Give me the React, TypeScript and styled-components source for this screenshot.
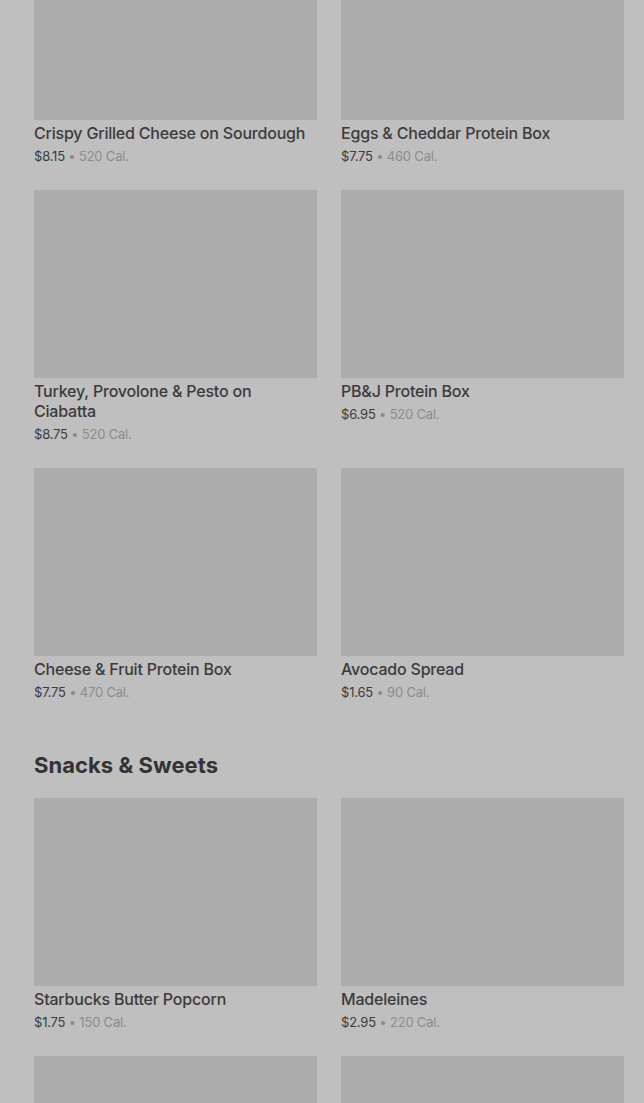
import React from 'react';
import styled, { createGlobalStyle } from 'styled-components';

const Global = createGlobalStyle`
  html, body {
    margin: 0;
    background: #bfbfbf;
    font-family: Inter, "Liberation Sans", Arial, sans-serif;
  }
`

const Page = styled.div`
  padding: 0 20px 0 34px;
  margin-top: -68px;
  overflow: hidden;
`

const Section = styled.section`
  & + & {
    margin-top: 50px;
  }
`

const Heading = styled.h2`
  margin: 0 0 19px;
  font-size: 22px;
  line-height: 28px;
  font-weight: 700;
  color: #333;
  letter-spacing: 0.05px;
`

const Grid = styled.div`
  display: grid;
  grid-template-columns: 283px 283px;
  column-gap: 24px;
  row-gap: 25px;
`

const Card = styled.div`
  display: flex;
  flex-direction: column;
`

const Thumb = styled.div`
  height: 188px;
  background: #acacac;
`

const Name = styled.div`
  margin-top: 3px;
  font-size: 16px;
  line-height: 20px;
  font-weight: 500;
  letter-spacing: -0.2px;
  color: #3b3b3b;
`

const Meta = styled.div`
  margin-top: 4px;
  font-size: 13px;
  line-height: 18px;
  letter-spacing: -0.2px;
  color: #8c8c8c;
  span {
    color: #3b3b3b;
  }
`

type Item = { name: string, price: string, cal: number }

const meals: Item[] = [
  { name: 'Crispy Grilled Cheese on Sourdough', price: '$8.15', cal: 520 },
  { name: 'Eggs & Cheddar Protein Box', price: '$7.75', cal: 460 },
  { name: 'Turkey, Provolone & Pesto on Ciabatta', price: '$8.75', cal: 520 },
  { name: 'PB&J Protein Box', price: '$6.95', cal: 520 },
  { name: 'Cheese & Fruit Protein Box', price: '$7.75', cal: 470 },
  { name: 'Avocado Spread', price: '$1.65', cal: 90 },
]

const snacks: Item[] = [
  { name: 'Starbucks Butter Popcorn', price: '$1.75', cal: 150 },
  { name: 'Madeleines', price: '$2.95', cal: 220 },
  { name: '', price: '', cal: 0 },
  { name: '', price: '', cal: 0 },
]

const Product = ({ item }: { item: Item }) => (
  <Card>
    <Thumb />
    {item.name && (
      <>
        <Name>{item.name}</Name>
        <Meta><span>{item.price}</span> • {item.cal} Cal.</Meta>
      </>
    )}
  </Card>
)

export default function App() {
  return (
    <>
      <Global />
      <Page>
        <Section>
          <Grid>
            {meals.map((m, i) => <Product key={i} item={m} />)}
          </Grid>
        </Section>
        <Section>
          <Heading>Snacks &amp; Sweets</Heading>
          <Grid>
            {snacks.map((m, i) => <Product key={i} item={m} />)}
          </Grid>
        </Section>
      </Page>
    </>
  )
}
